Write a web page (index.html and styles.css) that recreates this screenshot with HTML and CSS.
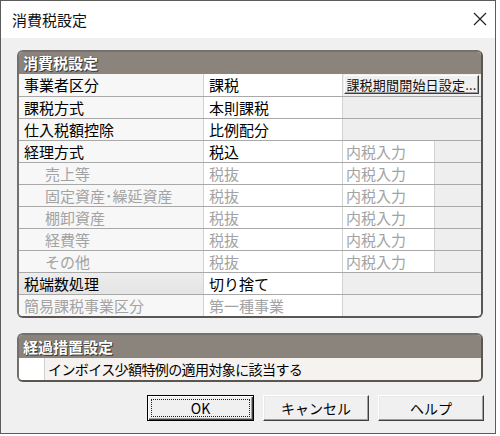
FILE: index.html
```html
<!DOCTYPE html>
<html lang="ja">
<head>
<meta charset="utf-8">
<title>消費税設定</title>
<link rel="stylesheet" href="styles.css">
</head>
<body>
<div class="window">
  <div class="titlebar">
    <span class="title">消費税設定</span>
    <svg class="close" width="14" height="14" viewBox="0 0 14 14"><path d="M1 1 L13 13 M13 1 L1 13" stroke="#222" stroke-width="1.2" fill="none"/></svg>
  </div>
  <div class="client">
    <section class="panel">
      <div class="panel-head">消費税設定</div>
      <div class="row first">
        <div class="c lab">事業者区分</div>
        <div class="c val">課税</div>
        <div class="c span2 btn-cell"><div class="cellbtn">課税期間開始日設定...</div></div>
      </div>
      <div class="row">
        <div class="c lab">課税方式</div>
        <div class="c val">本則課税</div>
        <div class="c span2 empty"></div>
      </div>
      <div class="row">
        <div class="c lab">仕入税額控除</div>
        <div class="c val">比例配分</div>
        <div class="c span2 empty"></div>
      </div>
      <div class="row">
        <div class="c lab">経理方式</div>
        <div class="c val">税込</div>
        <div class="c in dis">内税入力</div>
        <div class="c empty"></div>
      </div>
      <div class="row">
        <div class="c lab sub dis">売上等</div>
        <div class="c val dis">税抜</div>
        <div class="c in dis">内税入力</div>
        <div class="c empty"></div>
      </div>
      <div class="row">
        <div class="c lab sub dis">固定資産･繰延資産</div>
        <div class="c val dis">税抜</div>
        <div class="c in dis">内税入力</div>
        <div class="c empty"></div>
      </div>
      <div class="row">
        <div class="c lab sub dis">棚卸資産</div>
        <div class="c val dis">税抜</div>
        <div class="c in dis">内税入力</div>
        <div class="c empty"></div>
      </div>
      <div class="row">
        <div class="c lab sub dis">経費等</div>
        <div class="c val dis">税抜</div>
        <div class="c in dis">内税入力</div>
        <div class="c empty"></div>
      </div>
      <div class="row">
        <div class="c lab sub dis">その他</div>
        <div class="c val dis">税抜</div>
        <div class="c in dis">内税入力</div>
        <div class="c empty"></div>
      </div>
      <div class="row">
        <div class="c lab focus-row">税端数処理</div>
        <div class="c val">切り捨て</div>
        <div class="c span2 empty"></div>
      </div>
      <div class="row">
        <div class="c lab dis">簡易課税事業区分</div>
        <div class="c val dis">第一種事業</div>
        <div class="c span2 empty light"></div>
      </div>
    </section>

    <section class="panel panel2">
      <div class="panel-head tall">経過措置設定</div>
      <div class="check-row">
        <div class="check-cell"></div>
        <div class="check-label">インボイス少額特例の適用対象に該当する</div>
      </div>
    </section>

    <div class="buttons">
      <div class="btn default"><span class="focus">OK</span></div>
      <div class="btn"><span class="plain">キャンセル</span></div>
      <div class="btn"><span class="plain">ヘルプ</span></div>
    </div>
  </div>
</div>
</body>
</html>
```

FILE: styles.css
```css
* { box-sizing: border-box; }

html, body {
  margin: 0;
  padding: 0;
  background: #ffffff;
  font-family: "Noto Sans CJK JP", "Noto Sans", sans-serif;
  color: #000;
}

.window {
  width: 496px;
  height: 434px;
  border: 1px solid #5c5c5c;
  background: #f0f0f0;
  display: flex;
  flex-direction: column;
}

.titlebar {
  height: 37px;
  background: #ffffff;
  display: flex;
  align-items: center;
  justify-content: space-between;
  padding: 0 8px 0 11px;
}

.title {
  font-size: 15px;
  line-height: 20px;
  color: #111;
}

.close {
  display: block;
  margin-top: -2px;
}

.client {
  flex: 1;
  padding: 12px 11px 0 16px;
  display: flex;
  flex-direction: column;
}

.panel {
  width: 466px;
  border: 2px solid #74706b;
  border-right-color: #5a5652;
  border-bottom-color: #5a5652;
  border-radius: 6px;
  overflow: hidden;
  background: #fafafa;
}

.panel-head {
  height: 22px;
  background: #8a847d;
  color: #fff;
  font-size: 15px;
  font-weight: bold;
  line-height: 22px;
  padding-left: 4px;
  text-shadow: 1px 1px 0 #3e3a36, 0 0 1px #3e3a36;
}

.panel-head.tall {
  height: 23px;
  line-height: 23px;
}

.row {
  display: grid;
  grid-template-columns: 184px 139px 92px 47px;
  height: 22px;
  border-top: 1px solid #a9a9a9;
}

.row.first {
  border-top: none;
}

.c {
  display: flex;
  align-items: center;
  font-size: 15px;
  line-height: 20px;
  white-space: nowrap;
  overflow: hidden;
  border-left: 1px solid #d2d2d2;
}

.lab {
  border-left: none;
  background: #f7f7f7;
  padding-left: 5px;
}

.lab.sub {
  padding-left: 26px;
}

.lab.focus-row {
  background: linear-gradient(#ededed, #e4e4e4);
}

.val {
  background: #ffffff;
  padding-left: 5px;
}

.in {
  background: #ffffff;
  padding-left: 3px;
}

.empty {
  background: #eeeeee;
}

.empty.light {
  background: #f3f3f3;
}

.span2 {
  grid-column: span 2;
}

.dis {
  color: #a3a3a3;
}

.btn-cell {
  background: #eeeeee;
  padding: 1px 2px 2px 1px;
  align-items: stretch;
}

.cellbtn {
  flex: 1;
  display: flex;
  align-items: center;
  justify-content: center;
  font-size: 13px;
  letter-spacing: 0.2px;
  background: #f0f0f0;
  border: 1px solid;
  border-color: #ffffff #3c3c3c #3c3c3c #ffffff;
  box-shadow: inset -1px -1px 0 #a0a0a0;
  color: #111;
}

.panel2 {
  margin-top: 15px;
}

.check-row {
  display: flex;
  height: 22px;
}

.check-cell {
  width: 26px;
  background: #ffffff;
  border-right: 1px solid #cfcfcf;
}

.check-label {
  flex: 1;
  background: #f5f2f0;
  font-size: 14px;
  letter-spacing: -0.6px;
  line-height: 22px;
  padding-left: 3px;
  white-space: nowrap;
}

.buttons {
  margin-top: 13px;
  display: flex;
  justify-content: flex-end;
  gap: 9px;
}

.btn {
  width: 106px;
  height: 26px;
  background: #f0f0f0;
  border: 1px solid;
  border-color: #ffffff #404040 #404040 #ffffff;
  box-shadow: inset -1px -1px 0 #a0a0a0, inset 1px 1px 0 #e8e8e8;
  display: flex;
  padding: 2px;
  font-size: 14px;
}

.btn.default {
  width: 107px;
  border: 1px solid #000;
  box-shadow: inset 1px 1px 0 #ffffff, inset -1px -1px 0 #404040, inset -2px -2px 0 #a0a0a0;
  padding: 3px;
}

.btn .plain,
.btn .focus {
  flex: 1;
  display: flex;
  align-items: center;
  justify-content: center;
  line-height: 18px;
}

.btn .focus {
  border: 1px dotted #222;
}
```
